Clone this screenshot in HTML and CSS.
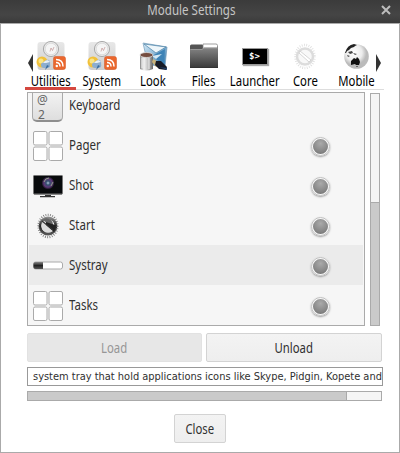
FILE: index.html
```html
<!DOCTYPE html>
<html lang="en">
<head>
<meta charset="utf-8">
<title>Module Settings</title>
<link rel="stylesheet" href="styles.css">
</head>
<body>
<svg class="defs" width="0" height="0" aria-hidden="true">
  <defs>
    <linearGradient id="paper" x2="0" y2="1"><stop stop-color="#e0e0e0"/><stop offset="1" stop-color="#bdbdbd"/></linearGradient>
    <linearGradient id="steel" x2="0" y2="1"><stop stop-color="#858585"/><stop offset="1" stop-color="#3c3c3c"/></linearGradient>
    <linearGradient id="can"><stop stop-color="#888"/><stop offset=".3" stop-color="#f4f4f4"/><stop offset=".65" stop-color="#bbb"/><stop offset="1" stop-color="#666"/></linearGradient>
    <linearGradient id="sky" x2="1" y2="1"><stop stop-color="#d8ecf8"/><stop offset="1" stop-color="#347bb0"/></linearGradient>
    <linearGradient id="dark" x2="0" y2="1"><stop stop-color="#888"/><stop offset=".5" stop-color="#222"/><stop offset="1" stop-color="#555"/></linearGradient>
    <radialGradient id="ball" cx=".4" cy=".35"><stop stop-color="#fff"/><stop offset=".65" stop-color="#ececec"/><stop offset="1" stop-color="#bbb"/></radialGradient>
    <radialGradient id="lens"><stop stop-color="#b4c6da"/><stop offset=".3" stop-color="#34506e"/><stop offset=".65" stop-color="#603878"/><stop offset="1" stop-color="#080c10"/></radialGradient>
    <symbol id="utilities" viewBox="0 0 30 30">
      <rect x="1.500" y="1" width="27" height="28" rx="3" fill="url(#paper)" opacity=".75"/>
      <circle cx="15" cy="8" r="7.600" fill="#e9e9e9" stroke="#aaa"/>
      <circle cx="15" cy="8" r="5.800" fill="#f5f5f5" stroke="#ddd"/>
      <path d="M14 10.500 15 7l1.500 2.500 1.500-3.500" fill="none" stroke="#b88" stroke-width=".6"/>
      <circle cx="6" cy="21" r="5.500" fill="#f1c13a"/><circle cx="5" cy="20" r="2.500" fill="#f9e587"/>
      <path d="M5 24c0-3 3-2 4-4 3-3 6 0 5 3 1 3-1 4-3 4H8c-2 0-3-1-3-3Z" fill="#8caed0"/><path d="M7 22c2-3 5-4 7-1l-4 1Z" fill="#e7eff6"/><path d="m11 24-2 5 4-4Z" fill="#376a9e"/>
      <rect x="17.500" y="15.500" width="12" height="13" rx="2" fill="#ea672d" stroke="#d65420" stroke-width=".5"/>
      <circle cx="20.800" cy="25" r="1.200" fill="#fff"/><path d="M20 21.500q4 0 4 4M20 18.500q7 0 7 7" fill="none" stroke="#fff" stroke-width="1.500"/>
    </symbol>
    <symbol id="look" viewBox="0 0 30 30">
      <path d="M5 2 29 6l-2 19L10 24Z" fill="url(#sky)" stroke="#719ab8" stroke-width=".7"/>
      <path d="m6 3 12 9 10-6Z" fill="#eef6fa" stroke="#4b81a6" stroke-width=".7"/>
      <path d="M14 15 27 8l-1 16Z" fill="#3e83b6"/><path d="m14 15 10-2-6 5Z" fill="#d6eaf5"/>
      <path d="M2 14v14q6 3 13 0V14Z" fill="url(#can)"/><ellipse cx="8.500" cy="14" rx="6.500" ry="2.500" fill="#754d40" stroke="#ddd" stroke-width=".8"/>
      <path d="M4 17v10M11 17v11" stroke="#fff" stroke-width=".8"/>
      <path d="m15 18 4 2 3 4-4 2-4-5Z" fill="#c9b37a"/><path d="m18 20 5 0 6 6-1 3-7-1-4-4Z" fill="#171b26"/><path d="m21 26 8 1v2Z" fill="#223d65"/>
    </symbol>
    <symbol id="files" viewBox="0 0 30 30">
      <path d="M1 5q0-1.500 1.500-1.500H13l2 1.500h12.500Q29 5 29 7v19H1Z" fill="#555"/>
      <path d="M14 3h13q1.500 0 1.500 1.500V9H14Z" fill="#fff" stroke="#777" stroke-width=".7"/>
      <path d="M1 8h12l2-1.500h14V26H1Z" fill="url(#steel)"/><path d="M1.500 8.500H13l2-1.500h13.500" fill="none" stroke="#aaa" stroke-width=".6"/><path d="M1 26.500h28" stroke="#333"/>
    </symbol>
    <symbol id="core" viewBox="0 0 30 30">
      <circle cx="14" cy="15.500" r="8" fill="#f8f8f8" stroke="#dcdcdc" stroke-width="2.500"/>
      <ellipse cx="14" cy="15.500" rx="9.500" ry="11.500" fill="none" stroke="#ddd" stroke-width="2.500" stroke-dasharray=".8 1.500"/>
      <path d="m9 10 11 9-2 2L8 12Z" fill="#fff" stroke="#ccc" stroke-width=".8"/>
    </symbol>
    <symbol id="globe" viewBox="0 0 30 30">
      <circle cx="14.500" cy="15.500" r="12.300" fill="url(#ball)"/>
      <path d="M3 12q2-8 9-9l3 1-2 1-1 1-3 1-2 2-2 1-1 2Z" fill="#222"/><path d="m6 11 4-1 1 2-3 1ZM11 12l4 1-2 1ZM5 14l3 1-2 1Z" fill="#444"/>
      <path d="m9 20 3-3 2 1 1-2 2 2 1 3-1 3-3 0-1-1-4 1ZM14 25h2l-1 1Z" fill="#111"/>
    </symbol>
    <symbol id="pager" viewBox="0 0 30 30">
      <g fill="#fff" stroke="#aaa"><rect x=".5" y=".5" width="13.500" height="13.500" rx="1.500"/><rect x="16" y=".5" width="13.500" height="13.500" rx="1.500"/><rect x=".5" y="16" width="13.500" height="13.500" rx="1.500"/><rect x="16" y="16" width="13.500" height="13.500" rx="1.500"/></g>
    </symbol>
    <symbol id="shot" viewBox="0 0 30 30">
      <rect x=".5" y="4.500" width="29" height="18.500" rx=".7" fill="#080a0c" stroke="#777"/>
      <circle cx="15" cy="12" r="6.500" fill="url(#lens)"/><path d="M11 11q1-4 5-4M18 15l2-4" stroke="#9db78d" fill="none" stroke-width=".8"/>
      <path d="M1 23.500h28" stroke="#888"/><path d="M12 24h6v1h4v1.200H7v-1.200h5Z" fill="#333"/>
    </symbol>
    <symbol id="start" viewBox="0 0 30 30">
      <circle cx="15" cy="15" r="8" fill="#eee" stroke="url(#dark)" stroke-width="2.800"/>
      <path d="m10 9 10 8q1-7-4-9-4-2-6 1Z" fill="#666"/><path d="m9 11 11 9q-5 3-9 0-4-3-2-9Z" fill="#ddd"/>
      <path d="M13 14 21 21q2-3 1-7l-3-1-6-2Z" fill="#222"/>
      <path d="m9 10 11 9" stroke="#333" stroke-width="1.200"/>
      <ellipse cx="15" cy="15" rx="9.500" ry="11.200" fill="none" stroke="#777" stroke-width="2.200" stroke-dasharray=".8 1.500"/>
    </symbol>
    <symbol id="systray" viewBox="0 0 30 30">
      <rect x=".5" y="11" width="29" height="7" rx="2" fill="#fff" stroke="#aaa"/><path d="M2.500 11H10v7H2.500q-2 0-2-2v-3q0-2 2-2Z" fill="url(#dark)"/>
    </symbol>
  </defs>
</svg>
<main class="window">
  <header class="titlebar">
    <span class="label title">Module Settings</span>
    <svg class="close-icon" viewBox="0 0 10 10"><path d="m1 1 8 8M9 1 1 9"/></svg>
  </header>
  <section class="content">
    <nav class="tabs">
      <div class="tab active"><svg><use href="#utilities"/></svg><span class="label">Utilities</span></div>
      <div class="tab"><svg><use href="#utilities"/></svg><span class="label">System</span></div>
      <div class="tab"><svg><use href="#look"/></svg><span class="label">Look</span></div>
      <div class="tab"><svg><use href="#files"/></svg><span class="label">Files</span></div>
      <div class="tab"><div class="icon"><div class="terminal">$&gt;</div></div><span class="label">Launcher</span></div>
      <div class="tab"><svg><use href="#core"/></svg><span class="label">Core</span></div>
      <div class="tab"><svg><use href="#globe"/></svg><span class="label">Mobile</span></div>
      <svg class="arrow prev" viewBox="0 0 5 18"><path d="M5 0v18L0 9Z"/></svg>
      <svg class="arrow next" viewBox="0 0 5 18"><path d="M0 0v18l5-9Z"/></svg>
    </nav>
    <div class="modules">
      <div class="list">
        <div class="row first"><div class="keycap"><span>@</span><span>2</span></div><span class="label">Keyboard</span></div>
        <div class="row"><svg><use href="#pager"/></svg><span class="label">Pager</span><i class="dot"></i></div>
        <div class="row"><svg><use href="#shot"/></svg><span class="label">Shot</span><i class="dot"></i></div>
        <div class="row"><svg><use href="#start"/></svg><span class="label">Start</span><i class="dot"></i></div>
        <div class="row selected"><svg><use href="#systray"/></svg><span class="label">Systray</span><i class="dot"></i></div>
        <div class="row"><svg><use href="#pager"/></svg><span class="label">Tasks</span><i class="dot"></i></div>
      </div>
      <div class="scroll vertical"><div class="thumb"></div></div>
    </div>
    <div class="actions">
      <button class="disabled" disabled><span class="label">Load</span></button>
      <button><span class="label">Unload</span></button>
    </div>
    <div class="description"><span>system tray that hold applications icons like Skype, Pidgin, Kopete and</span></div>
    <div class="scroll horizontal"><div class="thumb"></div></div>
    <button class="close"><span class="label">Close</span></button>
  </section>
</main>
</body>
</html>
```
FILE: styles.css
```css
* { box-sizing: border-box; }
body { margin: 0; font: 14px/16px "Noto Sans", "Open Sans", sans-serif; color: #303030; }
svg { display: block; flex: none; }
.defs { position: absolute; }
.window { width: 400px; height: 453px; background: #fff; overflow: hidden; }
.titlebar { position: relative; height: 23px; display: flex; align-items: center; justify-content: center; background: linear-gradient(#3b3b3b, #454545 65%, #3a3a3a); color: #c6c6c6; padding: 0 18px 3px 0; }
.label { display: inline-block; white-space: nowrap; transform: scaleX(.81); }
.title { transform: scaleX(.825); }
.close-icon { position: absolute; right: 9px; top: 5px; width: 10px; height: 10px; fill: none; stroke: #bdbdbd; stroke-width: 2; }
.content { height: 430px; border: 1px solid #aaa; padding: 17px 15px 0 24px; }
.tabs { position: relative; display: flex; width: 359px; height: 49px; border-bottom: 1px solid #ddd; }
.tab { width: 51px; height: 49px; display: flex; flex-direction: column; align-items: center; color: #000; }
.tab svg, .tab .icon { width: 30px; height: 30px; }
.tab .label { margin-top: 2px; }
.tab.active { border-bottom: 3px solid #d4473f; }
.icon { display: flex; align-items: center; justify-content: center; }
.terminal { width: 26px; height: 17px; border: 1px solid #999; background: #000; box-shadow: 1px 1px 1px #aaa; color: #fff; font: bold 9px/14px "DejaVu Sans Mono", monospace; text-align: center; }
.arrow { position: absolute; width: 5px; height: 18px; top: 13px; fill: #333; }
.prev { left: 3px; }
.next { left: 351px; }
.modules { display: flex; gap: 5px; margin: 2px 0 0 2px; }
.list { width: 338px; height: 234px; border: 1px solid #aaa; padding: 0 1px; background: #f6f6f6; overflow: hidden; }
.row { height: 40px; display: flex; align-items: center; padding-left: 4px; gap: 6px; }
.row.first { height: 32px; align-items: flex-start; }
.row.first .label { margin-top: 4px; }
.row svg { width: 30px; height: 30px; margin-top: 2px; }
.row .label { transform-origin: left; transform: scaleX(.82); }
.selected { background: #ebebeb; }
.keycap { width: 31px; height: 37px; margin: -8px 0 0 -1px; padding: 6px 0 0 4px; border: 1px solid #aaa; border-bottom: 2px solid #8e8e8e; border-radius: 5px; background: linear-gradient(#f8f8f8, #dedede); color: #666; font-size: 12px; line-height: 15px; display: flex; flex-direction: column; }
.keycap span + span { padding-left: 1px; }
.row .keycap + .label { margin-left: 0; }
.dot { width: 19px; height: 19px; margin: 2px 33px 0 auto; border: 2px solid #f8f8f8; border-radius: 50%; outline: 1px solid #c0c0c0; outline-offset: -1px; background: radial-gradient(circle at 50% 30%, #aaa, #858585 65%, #666); box-shadow: 0 1px 2px #999; }
.scroll { border: 1px solid #aaa; background: #f5f5f5; }
.thumb { background: #cacaca; }
.vertical { width: 10px; height: 233px; margin-top: 1px; display: flex; align-items: flex-end; }
.vertical .thumb { width: 100%; height: 123px; border-top: 1px solid #aaa; }
.actions { display: flex; gap: 4px; margin: 7px 0 0 2px; }
button { width: 176px; height: 29px; padding: 0; border: 1px solid #d3d3d3; border-radius: 2px; background: linear-gradient(#f3f3f3, #eee); color: #303030; font: inherit; }
button.disabled { width: 175px; background: #e7e7e7; border-color: #e2e2e2; color: #969696; }
.description { width: 356px; height: 19px; margin: 5px 0 0 2px; border: 1px solid #999; padding-left: 5px; white-space: nowrap; overflow: hidden; font: 10.5px/17px "DejaVu Sans", sans-serif; }
.description span { display: inline-block; transform: scaleX(.939); transform-origin: left; }
.horizontal { width: 355px; height: 10px; margin: 5px 0 0 2px; }
.horizontal .thumb { width: 319px; height: 8px; border-right: 1px solid #aaa; }
.close { display: block; width: 52px; margin: 13px 0 0 149px; }
```
